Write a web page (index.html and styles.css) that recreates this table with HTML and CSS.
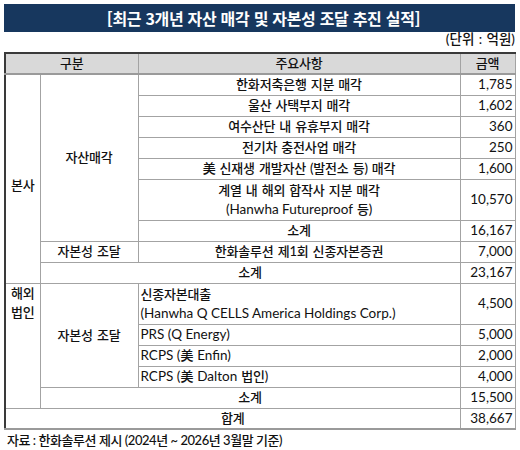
FILE: index.html
```html
<!DOCTYPE html>
<html lang="ko">
<head>
<meta charset="utf-8">
<link rel="stylesheet" href="styles.css">
</head>
<body>
<div class="wrap">
  <div class="title">[최근 3개년 자산 매각 및 자본성 조달 추진 실적]</div>
  <div class="unit">(단위 : 억원)</div>
  <table class="tbl">
    <colgroup>
      <col class="c1"><col class="c2"><col class="c3"><col class="c4">
    </colgroup>
    <thead>
      <tr class="head">
        <th colspan="2">구분</th>
        <th>주요사항</th>
        <th>금액</th>
      </tr>
    </thead>
    <tbody>
      <tr>
        <td rowspan="9" class="grp grp-hq">본사</td>
        <td rowspan="7" class="sub">자산매각</td>
        <td class="ctr">한화저축은행 지분 매각</td>
        <td class="amt">1,785</td>
      </tr>
      <tr><td class="ctr">울산 사택부지 매각</td><td class="amt">1,602</td></tr>
      <tr><td class="ctr">여수산단 내 유휴부지 매각</td><td class="amt">360</td></tr>
      <tr><td class="ctr">전기차 충전사업 매각</td><td class="amt">250</td></tr>
      <tr><td class="ctr">美 신재생 개발자산 (발전소 등) 매각</td><td class="amt">1,600</td></tr>
      <tr class="two"><td class="ctr">계열 내 해외 합작사 지분 매각<br><span class="en">(Hanwha Futureproof</span> 등)</td><td class="amt">10,570</td></tr>
      <tr><td class="ctr">소계</td><td class="amt">16,167</td></tr>
      <tr><td class="sub">자본성 조달</td><td class="ctr">한화솔루션 제1회 신종자본증권</td><td class="amt">7,000</td></tr>
      <tr><td colspan="2" class="ctr">소계</td><td class="amt">23,167</td></tr>
      <tr class="two">
        <td rowspan="5" class="grp grp-ov">해외<br>법인</td>
        <td rowspan="4" class="sub">자본성 조달</td>
        <td class="lft">신종자본대출<br><span class="en">(Hanwha Q CELLS America Holdings Corp.)</span></td>
        <td class="amt">4,500</td>
      </tr>
      <tr><td class="lft"><span class="en">PRS (Q Energy)</span></td><td class="amt">5,000</td></tr>
      <tr><td class="lft"><span class="en">RCPS (</span>美 <span class="en">Enfin)</span></td><td class="amt">2,000</td></tr>
      <tr><td class="lft"><span class="en">RCPS (</span>美 <span class="en">Dalton</span> 법인)</td><td class="amt">4,000</td></tr>
      <tr><td colspan="2" class="ctr">소계</td><td class="amt">15,500</td></tr>
      <tr><td colspan="3" class="ctr">합계</td><td class="amt">38,667</td></tr>
    </tbody>
  </table>
  <div class="source">자료 : 한화솔루션 제시 (2024년 ~ 2026년 3월말 기준)</div>
</div>
</body>
</html>
```

FILE: styles.css
```css
* { box-sizing: border-box; }
html, body { margin: 0; padding: 0; background: #ffffff; }
body {
  font-family: Lato, "Noto Sans CJK KR", sans-serif;
  font-size: 13px;
  color: #111111;
}
.wrap { width: 520px; padding: 4px 5px 0 4px; }
.title {
  height: 28px;
  background: #17375e;
  color: #ffffff;
  font-family: "Noto Sans CJK KR", sans-serif;
  font-weight: 700;
  font-size: 16px;
  line-height: 28px;
  text-align: center;
  letter-spacing: -0.3px;
  padding-left: 8px;
}
.unit {
  height: 20px;
  line-height: 14px;
  text-align: right;
  font-size: 13.5px;
  font-weight: 500;
  word-spacing: 1px;
}
.tbl {
  width: 510px;
  border-collapse: collapse;
  table-layout: fixed;
  border-top: 2px solid #3a3a3a;
  border-left: 2px solid #3a3a3a;
  border-right: 1px solid #9a9a9a;
  border-bottom: 2px solid #9a9a9a;
}
.c1 { width: 35px; }
.c2 { width: 98px; }
.c3 { width: 322px; }
.c4 { width: 55px; }
.tbl th, .tbl td {
  border: 1px solid #a3a3a3;
  padding: 0 3px;
  height: 21px;
  line-height: 19px;
  font-weight: 500;
  vertical-align: middle;
  white-space: nowrap;
  letter-spacing: -0.2px;
  word-spacing: 1px;
}
.tbl .head th {
  background: #d9d9d9;
  text-align: center;
  border-bottom: 2px solid #9a9a9a;
  height: 21px;
}
.tbl tr.two td { height: 41px; }
.en { font-size: 13.5px; letter-spacing: 0; word-spacing: 0; font-weight: 400; }
.ctr { text-align: center; }
.lft { text-align: left; padding-left: 2px !important; }
.amt {
  text-align: right;
  padding-right: 2px !important;
  font-size: 13.5px;
  letter-spacing: 0 !important;
  font-weight: 400 !important;
}
.sub { text-align: center; }
.grp { text-align: center; padding: 0 !important; }
.grp-hq { padding-top: 14px !important; }
.grp-ov { vertical-align: top !important; padding-top: 0 !important; line-height: 19px !important; }
.source {
  padding-left: 3px;
  height: 22px;
  line-height: 20px;
  font-size: 13px;
  font-weight: 500;
  letter-spacing: -0.45px;
}
```
